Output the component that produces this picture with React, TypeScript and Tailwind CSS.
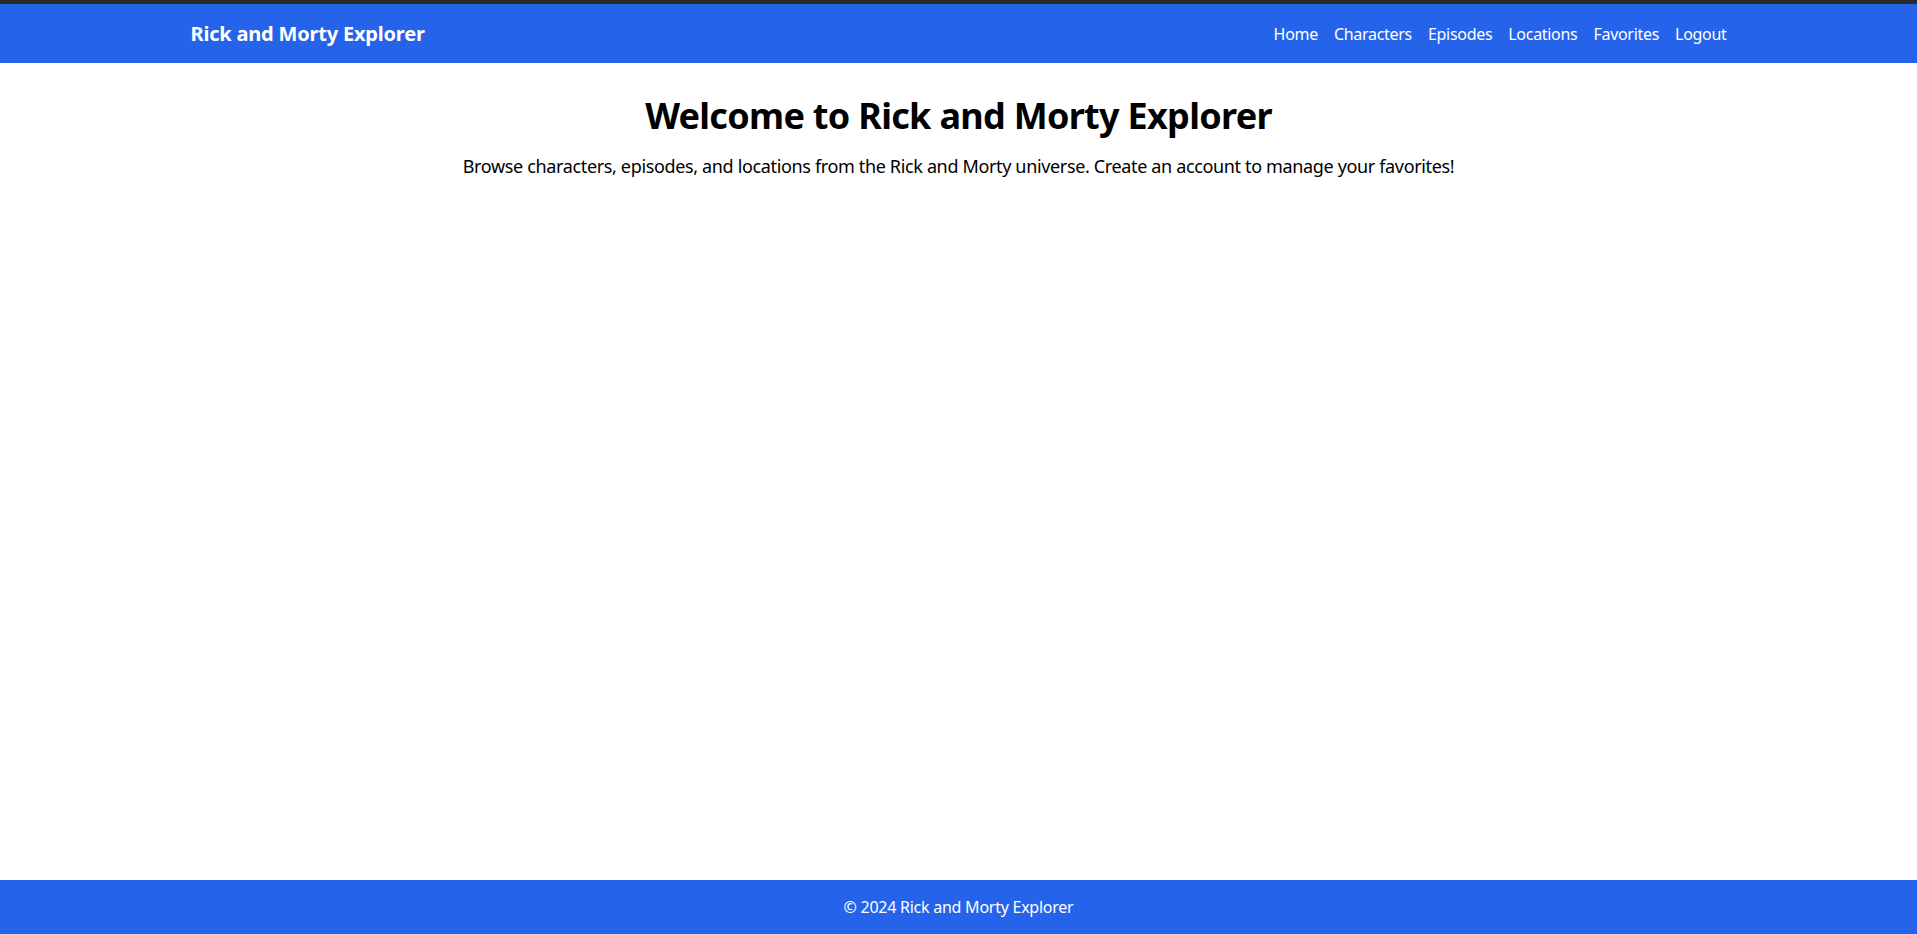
import React from 'react';

const links = ['Home', 'Characters', 'Episodes', 'Locations', 'Favorites', 'Logout'];

const App: React.FC = () => {
  return (
    <div
      className="min-h-screen flex flex-col bg-white text-black"
      style={{ fontFamily: '"Noto Sans", "Open Sans", sans-serif' }}
    >
      <div className="h-[4px] bg-[#2b2b2b]"></div>
      <header className="bg-[#2563eb] text-white">
        <nav className="mx-auto w-full max-w-[1536px] h-[59px] flex items-center justify-between">
          <a href="#" className="text-xl font-bold tracking-[-0.2px]">Rick and Morty Explorer</a>
          <ul className="flex items-center gap-4 text-base tracking-[-0.3px]">
            {links.map((l) => (
              <li key={l}>
                <a href="#" className="hover:underline">{l}</a>
              </li>
            ))}
          </ul>
        </nav>
      </header>

      <main className="flex-1 mx-auto w-full max-w-[1536px] pt-[33px] text-center">
        <h1 className="text-4xl font-bold mb-4 tracking-[-0.7px]">Welcome to Rick and Morty Explorer</h1>
        <p className="text-lg tracking-[-0.35px]">
          Browse characters, episodes, and locations from the Rick and Morty universe. Create an account to manage your favorites!
        </p>
      </main>

      <footer className="bg-[#2563eb] text-white h-[54px] flex items-center justify-center">
        <p className="text-base tracking-[-0.25px]">© 2024 Rick and Morty Explorer</p>
      </footer>
    </div>
  );
};

export default App;
